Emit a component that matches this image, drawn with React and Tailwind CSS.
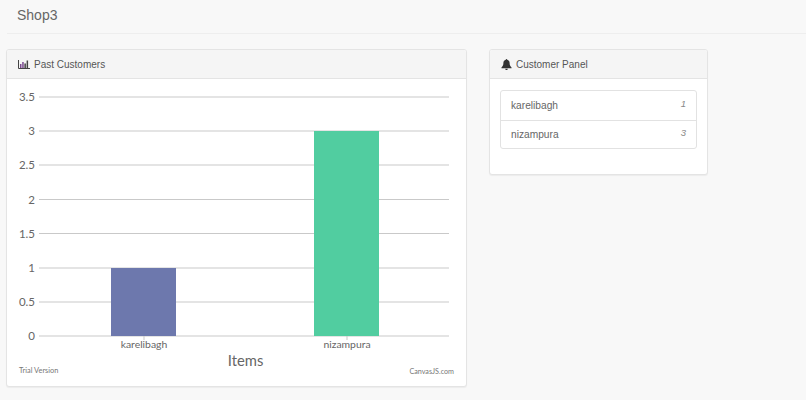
import React from "react";

const yTicks = [
    { label: "3.5", y: 97 },
    { label: "3", y: 131 },
    { label: "2.5", y: 165 },
    { label: "2", y: 199.5 },
    { label: "1.5", y: 233.5 },
    { label: "1", y: 268 },
    { label: "0.5", y: 302 },
    { label: "0", y: 336 },
];

const customers = [
    { name: "karelibagh", count: 1 },
    { name: "nizampura", count: 3 },
];

const BarChartIcon = () => (
    <svg width="12" height="9" viewBox="0 0 12 9" className="shrink-0">
        <path d="M0.5 0V8.5H12" stroke="#444" strokeWidth="1" fill="none" />
        <rect x="2" y="4" width="1.5" height="4" fill="#7b4a8f" />
        <rect x="4.2" y="2" width="1.5" height="6" fill="#7b4a8f" />
        <rect x="6.4" y="3.5" width="1.5" height="4.5" fill="#444" />
        <rect x="8.6" y="0.5" width="1.5" height="7.5" fill="#444" />
    </svg>
);

const BellIcon = () => (
    <svg width="11" height="11" viewBox="0 0 11 12" className="shrink-0">
        <path d="M5.5 0C6 0 6.3.4 6.3.9C8 1.3 8.9 2.7 8.9 4.4C8.9 6.8 9.6 8 11 9.2V10H0V9.2C1.4 8 2.1 6.8 2.1 4.4C2.1 2.7 3 1.3 4.7.9C4.7.4 5 0 5.5 0Z" fill="#333" />
        <path d="M4.1 10.5H6.9C6.9 11.3 6.3 12 5.5 12C4.7 12 4.1 11.3 4.1 10.5Z" fill="#333" />
    </svg>
);

const Chart = () => (
    <svg width="459" height="307" viewBox="7 79 459 307" className="block" style={{ fontFamily: "Lato, sans-serif" }}>
        {yTicks.map((tick) => (
            <g key={tick.label}>
                <line x1="39" x2="449" y1={tick.y} y2={tick.y} stroke="#c9c9c9" strokeWidth="1" />
                <text x="35" y={tick.y + 4} textAnchor="end" fontSize="11.5" fill="#666">
                    {tick.label}
                </text>
            </g>
        ))}
        <rect x="111" y="268" width="65" height="68" fill="#6d78ad" />
        <rect x="314" y="131" width="65" height="205" fill="#51cda0" />
        <line x1="144" x2="144" y1="336" y2="340" stroke="#c9c9c9" />
        <line x1="347" x2="347" y1="336" y2="340" stroke="#c9c9c9" />
        <text x="144" y="348" textAnchor="middle" fontSize="10.4" fill="#666">karelibagh</text>
        <text x="347" y="348" textAnchor="middle" fontSize="10.4" fill="#666">nizampura</text>
        <text x="245.5" y="366" textAnchor="middle" fontSize="14.8" fill="#666">Items</text>
        <text x="19" y="373" fontSize="7.4" fill="#777">Trial Version</text>
        <text x="454" y="374" textAnchor="end" fontSize="7.2" fill="#777">CanvasJS.com</text>
    </svg>
);

const App = () => {
    return (
        <div className="h-[400px] w-[806px] overflow-hidden bg-[#f8f8f8] text-[#666] font-['Liberation_Sans',sans-serif]">
            <div className="ml-[7px] flex h-[34px] items-center border-b border-[#eeeeee] pb-[3px] pl-[10px] text-[14px]">
                Shop3
            </div>
            <div className="ml-[6px] mt-[15px] flex items-start gap-[22px]">
                <div className="w-[461px] overflow-hidden rounded-[3px] border border-[#e4e4e4] bg-white shadow-[0_1px_1px_rgba(0,0,0,0.05)]">
                    <div className="flex h-[29px] items-center gap-[4px] border-b border-[#e4e4e4] bg-[#f5f5f5] pl-[11px] text-[10px] text-[#555]">
                        <BarChartIcon />
                        <span>Past Customers</span>
                    </div>
                    <Chart />
                </div>
                <div className="w-[219px] overflow-hidden rounded-[3px] border border-[#e4e4e4] bg-white shadow-[0_1px_1px_rgba(0,0,0,0.05)]">
                    <div className="flex h-[29px] items-center gap-[4px] border-b border-[#e4e4e4] bg-[#f5f5f5] pl-[11px] text-[10px] text-[#555]">
                        <BellIcon />
                        <span>Customer Panel</span>
                    </div>
                    <div className="px-[10px] pb-[25px] pt-[11px]">
                        <div className="rounded-[3px] border border-[#e2e2e2]">
                            {customers.map((customer, index) => (
                                <div
                                    key={customer.name}
                                    className={`flex h-[28.5px] items-center justify-between pl-[10px] pr-[10px] text-[10.2px] ${index > 0 ? "border-t border-[#e2e2e2]" : ""}`}
                                >
                                    <span>{customer.name}</span>
                                    <em className="mb-[3px] text-[9.5px] text-[#888]">{customer.count}</em>
                                </div>
                            ))}
                        </div>
                    </div>
                </div>
            </div>
        </div>
    );
};

export default App;
